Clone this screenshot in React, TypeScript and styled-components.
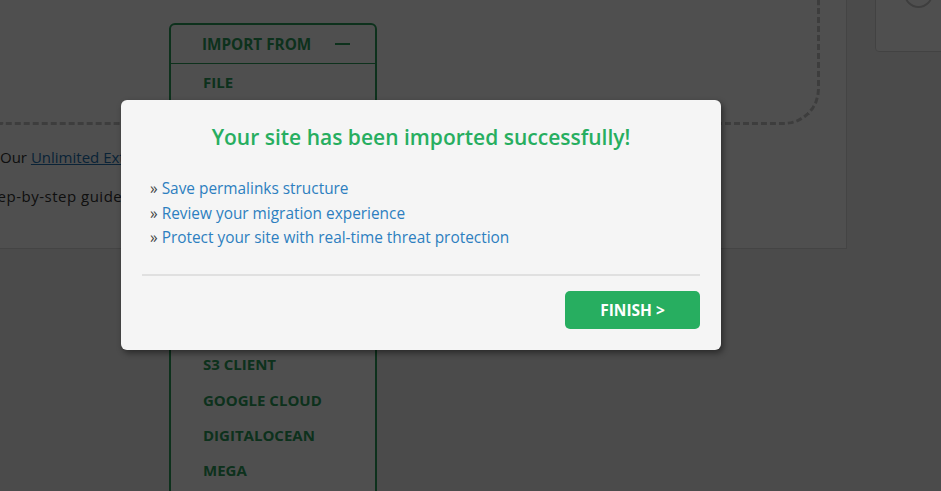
import React from "react";
import styled, { createGlobalStyle } from "styled-components";

const Global = createGlobalStyle`
  html, body { margin: 0; padding: 0; }
  body {
    font-family: "Open Sans", "Noto Sans", sans-serif;
    background: #f1f1f1;
    overflow: hidden;
  }
`;

const Page = styled.div`
  position: relative;
  width: 941px;
  height: 491px;
  overflow: hidden;
  background: #f1f1f1;
  display: flex;
  align-items: flex-start;
`;

const Card = styled.div`
  position: relative;
  flex: 0 0 847px;
  height: 249px;
  box-sizing: border-box;
  background: #ffffff;
  border-right: 1px solid #dcdcdc;
  border-bottom: 1px solid #dcdcdc;
`;

const DropZone = styled.div`
  position: relative;
  width: 820px;
  height: 125px;
  box-sizing: border-box;
  border-right: 3px dashed #c4c4c4;
  border-bottom: 3px dashed #c4c4c4;
  border-bottom-right-radius: 36px;
`;

const Import = styled.div`
  position: absolute;
  left: 169px;
  top: 23px;
  width: 208px;
  height: 520px;
  box-sizing: border-box;
  border: 2px solid #2a9d5c;
  border-radius: 6px;
  background: #ffffff;
  z-index: 1;
`;

const ImportHeader = styled.div`
  height: 39px;
  box-sizing: border-box;
  border-bottom: 1px solid #2a9d5c;
  display: flex;
  align-items: center;
  padding: 0 25px 0 31px;
  justify-content: space-between;
  color: #2a9d5c;
  font-size: 15.3px;
  font-weight: 700;
`;

const Minus = styled.span`
  display: block;
  width: 15px;
  height: 2px;
  background: #2a9d5c;
`;

const ImportList = styled.ul`
  list-style: none;
  margin: 0;
  padding: 1px 0 0 32px;
`;

const ImportItem = styled.li`
  height: 35.3px;
  line-height: 35.3px;
  color: #2a9d5c;
  font-size: 15px;
  font-weight: 700;
  white-space: nowrap;
`;

const Lines = styled.div`
  padding-top: 19px;
`;

const Line = styled.p<{ $shift: number; $spacing?: number }>`
  margin: 0;
  height: 39px;
  line-height: 26px;
  font-size: 15px;
  color: #333333;
  white-space: nowrap;
  margin-left: ${(p) => p.$shift}px;
  letter-spacing: ${(p) => p.$spacing ?? 0}px;
`;

const Link = styled.a`
  color: #2271b1;
  text-decoration: underline;
`;

const Side = styled.div`
  margin-left: 28px;
  margin-top: -12px;
  flex: 0 0 80px;
  height: 64px;
  box-sizing: border-box;
  border: 1px solid #d6d6d6;
  border-radius: 4px;
  background: #ffffff;
  display: flex;
  justify-content: flex-start;
  padding-left: 28px;
`;

const Circle = styled.div`
  width: 25px;
  height: 25px;
  margin-top: -10px;
  border: 2px solid #c8c8c8;
  border-radius: 50%;
`;

const Overlay = styled.div`
  position: absolute;
  inset: 0;
  background: rgba(0, 0, 0, 0.69);
  z-index: 5;
  display: flex;
  align-items: flex-start;
  padding: 100px 0 0 121px;
  box-sizing: border-box;
`;

const Modal = styled.div`
  width: 600px;
  height: 250px;
  box-sizing: border-box;
  background: #f5f5f5;
  border-radius: 6px;
  box-shadow: 2px 3px 6px rgba(0, 0, 0, 0.45);
  padding: 20px 21px 21px;
  display: flex;
  flex-direction: column;
`;

const Title = styled.h2`
  margin: 0;
  text-align: center;
  color: #27ae60;
  font-size: 21px;
  font-weight: 600;
  line-height: 34px;
`;

const Steps = styled.ul`
  list-style: none;
  margin: 23px 0 0;
  padding: 0 0 0 8px;
`;

const Step = styled.li`
  font-size: 15.4px;
  line-height: 24.5px;
  color: #444444;
  white-space: nowrap;
`;

const StepLink = styled.a`
  color: #2d7fc0;
  text-decoration: none;
`;

const Divider = styled.hr`
  margin: 23px 0 0;
  border: 0;
  height: 2px;
  background: #e0e0e0;
`;

const Footer = styled.div`
  margin-top: 15px;
  display: flex;
  justify-content: flex-end;
`;

const Finish = styled.button`
  width: 135px;
  height: 38px;
  border: 0;
  border-radius: 5px;
  background: #27ae60;
  color: #ffffff;
  font-family: "Open Sans", "Noto Sans", sans-serif;
  font-size: 15.5px;
  font-weight: 700;
  cursor: pointer;
`;

const providers = [
  "FILE",
  "FTP",
  "DROPBOX",
  "GOOGLE DRIVE",
  "AMAZON S3",
  "BACKBLAZE B2",
  "ONEDRIVE",
  "BOX",
  "S3 CLIENT",
  "GOOGLE CLOUD",
  "DIGITALOCEAN",
  "MEGA",
  "PCLOUD",
];

const steps = [
  "Save permalinks structure",
  "Review your migration experience",
  "Protect your site with real-time threat protection",
];

export default function App() {
  return (
    <>
      <Global />
      <Page>
        <Card>
          <DropZone>
            <Import>
              <ImportHeader>
                IMPORT FROM
                <Minus />
              </ImportHeader>
              <ImportList>
                {providers.map((p) => (
                  <ImportItem key={p}>{p}</ImportItem>
                ))}
              </ImportList>
            </Import>
          </DropZone>
          <Lines>
            <Line $shift={0}>
              Our <Link href="#">Unlimited Extension</Link> includes site restore tools.
            </Line>
            <Line $shift={-17} $spacing={0.5}>
              Step-by-step guide to migrate your site.
            </Line>
          </Lines>
        </Card>
        <Side>
          <Circle />
        </Side>
        <Overlay>
          <Modal>
            <Title>Your site has been imported successfully!</Title>
            <Steps>
              {steps.map((s) => (
                <Step key={s}>
                  » <StepLink href="#">{s}</StepLink>
                </Step>
              ))}
            </Steps>
            <Divider />
            <Footer>
              <Finish>FINISH &gt;</Finish>
            </Footer>
          </Modal>
        </Overlay>
      </Page>
    </>
  );
}
